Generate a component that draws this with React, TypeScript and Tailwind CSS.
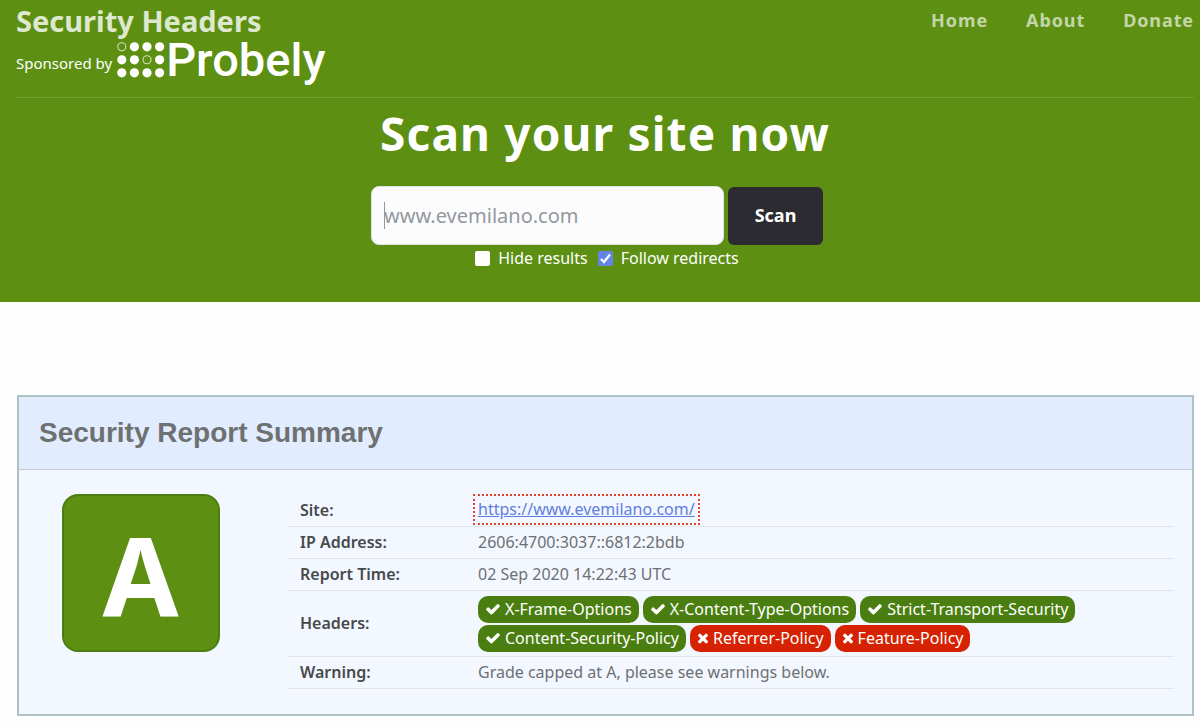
import { useState } from 'react'

interface HeaderCheck {
  name: string;
  passed: boolean;
}

const navLinks = ['Home', 'About', 'Donate']

const headerChecks: HeaderCheck[] = [
  { name: 'X-Frame-Options', passed: true },
  { name: 'X-Content-Type-Options', passed: true },
  { name: 'Strict-Transport-Security', passed: true },
  { name: 'Content-Security-Policy', passed: true },
  { name: 'Referrer-Policy', passed: false },
  { name: 'Feature-Policy', passed: false },
]

// hollow dots of the sponsor logo, as "row-column"
const hollowDots = ['0-0', '1-2']

function CheckIcon() {
  return (
    <svg viewBox="0 0 1792 1792" className="w-4 h-4 shrink-0" fill="currentColor" aria-hidden="true">
      <path d="M1671 566q0 40-28 68l-724 724-136 136q-28 28-68 28t-68-28l-136-136-362-362q-28-28-28-68t28-68l136-136q28-28 68-28t68 28l294 295 656-657q28-28 68-28t68 28l136 136q28 28 28 68z" />
    </svg>
  )
}

function TimesIcon() {
  return (
    <svg viewBox="192 0 1408 1792" className="w-3 h-4 shrink-0" fill="currentColor" aria-hidden="true">
      <path d="M1490 1322q0 40-28 68l-136 136q-28 28-68 28t-68-28l-294-294-294 294q-28 28-68 28t-68-28l-136-136q-28-28-28-68t28-68l294-294-294-294q-28-28-28-68t28-68l136-136q28-28 68-28t68 28l294 294 294-294q28-28 68-28t68 28l136 136q28 28 28 68t-28 68l-294 294 294 294q28 28 28 68z" />
    </svg>
  )
}

function ProbelyLogo() {
  return (
    <a href="#probely" className="flex items-center text-white">
      <svg viewBox="0 0 48 36" className="w-12 h-9" aria-hidden="true">
        {[0, 1, 2].map((row) =>
          [0, 1, 2, 3].map((col) => {
            const hollow = hollowDots.includes(`${row}-${col}`)
            return (
              <circle
                key={`${row}-${col}`}
                cx={4.8 + col * 12.6}
                cy={4.8 + row * 13}
                r={hollow ? 4 : 4.6}
                fill={hollow ? 'none' : '#fff'}
                stroke={hollow ? '#d5e2c0' : 'none'}
                strokeWidth={1.1}
              />
            )
          })
        )}
      </svg>
      <span className="pl-px font-['Roboto',sans-serif] text-[47px] leading-9 font-medium">Probely</span>
    </a>
  )
}

interface OptionProps {
  id: string;
  label: string;
  checked: boolean;
  onChange: (value: boolean) => void;
}

function Option({ id, label, checked, onChange }: OptionProps) {
  return (
    <div className="flex items-center gap-2">
      <span className="grid">
        <input
          id={id}
          type="checkbox"
          checked={checked}
          onChange={(e) => onChange(e.target.checked)}
          className="peer col-start-1 row-start-1 appearance-none w-[15px] h-[15px] rounded-xs bg-white checked:bg-[#6485e6]"
        />
        <svg
          viewBox="0 0 15 15"
          className="col-start-1 row-start-1 w-[15px] h-[15px] pointer-events-none hidden peer-checked:block"
          fill="none"
          stroke="#fff"
          strokeWidth={2.2}
          aria-hidden="true"
        >
          <path d="M3 8l3 3 6-7.5" />
        </svg>
      </span>
      <label htmlFor={id}>{label}</label>
    </div>
  )
}

function Badge({ name, passed }: HeaderCheck) {
  return (
    <li
      className={`flex items-center gap-1 h-[27px] px-[7px] rounded-[10px] text-white ${
        passed ? 'bg-[#4a7e10]' : 'bg-[#d62200]'
      }`}
    >
      {passed ? <CheckIcon /> : <TimesIcon />}
      <span>{name}</span>
    </li>
  )
}

function Row({ title, children }: { title: string; children: React.ReactNode }) {
  return (
    <tr className="border-b border-[#e4e4e6]">
      <th scope="row" className="w-[178px] h-8 px-3 text-left font-semibold text-[#474a4a]">{title}</th>
      <td className="pl-3">{children}</td>
    </tr>
  )
}

export default function App() {
  const [site, setSite] = useState('')
  const [hideResults, setHideResults] = useState(false)
  const [followRedirects, setFollowRedirects] = useState(true)

  return (
    <div className="min-h-screen bg-[#fefefe] font-['Noto_Sans',sans-serif] text-base text-[#6e7072]">
      <header className="bg-[#5c8f12] pl-4 pr-[6px] pb-8 text-white">
        <div className="flex justify-between items-start h-[98px] border-b border-[#6fa02d]">
          <div className="pt-[3px]">
            <a href="#home" className="block text-[29px] leading-9 font-bold text-[#dee8ce]">Security Headers</a>
            <div className="flex items-end gap-[5px] pt-[3px] text-[15px]">
              <span className="leading-[30px]">Sponsored by</span>
              <ProbelyLogo />
            </div>
          </div>
          <nav className="flex gap-[38px] pt-[6px] text-[18px] leading-7 font-bold tracking-wider text-[#c4d6a7]">
            {navLinks.map((link) => (
              <a key={link} href={`#${link.toLowerCase()}`}>{link}</a>
            ))}
          </nav>
        </div>

        <div className="flex flex-col items-center">
          <h1 className="mt-[2px] text-[46px] leading-[66px] font-bold tracking-wide">Scan your site now</h1>
          <form className="mt-5 pr-4" onSubmit={(e) => e.preventDefault()}>
            <div className="flex items-center gap-1">
              <div className="relative">
                <input
                  type="text"
                  aria-label="Site address"
                  value={site}
                  onChange={(e) => setSite(e.target.value)}
                  placeholder="www.evemilano.com"
                  className="w-[353px] h-[59px] px-3 rounded-lg border border-[#dfe3e8] bg-[#fcfcfc] text-xl text-[#6e7072] placeholder:text-[#92989f]"
                />
                {/* caret */}
                <span className="absolute left-[13px] top-4 w-px h-[27px] bg-[#92989f]" />
              </div>
              <button type="submit" className="w-[95px] h-[58px] rounded-md bg-[#2b2b31] text-[18px] font-bold">
                Scan
              </button>
            </div>
            <div className="flex justify-center gap-[10px] pt-px pl-5">
              <Option id="hide" label="Hide results" checked={hideResults} onChange={setHideResults} />
              <Option id="follow" label="Follow redirects" checked={followRedirects} onChange={setFollowRedirects} />
            </div>
          </form>
        </div>
      </header>

      <main className="pt-[93px] pl-[17px] pr-[6px] pb-2">
        <section className="border-2 border-[#b0c1c4] bg-[#f3f7ff]">
          <h2 className="px-5 py-4 border-b border-[#c0cbd4] bg-[#e1edff] font-['Liberation_Sans',Arial,sans-serif] text-[28px] leading-10 font-bold text-[#6e7072]">
            Security Report Summary
          </h2>

          <div className="flex gap-[26px] pt-6 pr-[18px] pb-[25px]">
            <div className="flex justify-center items-start w-[243px] shrink-0">
              <div className="flex justify-center items-center w-[158px] h-[158px] rounded-2xl border-2 border-[#4a7e10] bg-[#5c8f12] text-[110px] font-bold text-white">
                A
              </div>
            </div>

            <table className="flex-1 border-collapse">
              <tbody className="block w-full">
                <Row title="Site:">
                  <a
                    href="https://www.evemilano.com/"
                    className="block w-fit px-[3px] -ml-[5px] border-2 border-dotted border-[#e0442a] leading-[27px] text-[#5f7fe0] underline"
                  >
                    https://www.evemilano.com/
                  </a>
                </Row>
                <Row title="IP Address:">2606:4700:3037::6812:2bdb</Row>
                <Row title="Report Time:">02 Sep 2020 14:22:43 UTC</Row>
                <Row title="Headers:">
                  <ul className="flex flex-wrap gap-x-1 gap-y-[2px] pt-[5px] pb-1">
                    {headerChecks.map((check) => (
                      <Badge key={check.name} name={check.name} passed={check.passed} />
                    ))}
                  </ul>
                </Row>
                <Row title="Warning:">Grade capped at A, please see warnings below.</Row>
              </tbody>
            </table>
          </div>
        </section>
      </main>
    </div>
  )
}
